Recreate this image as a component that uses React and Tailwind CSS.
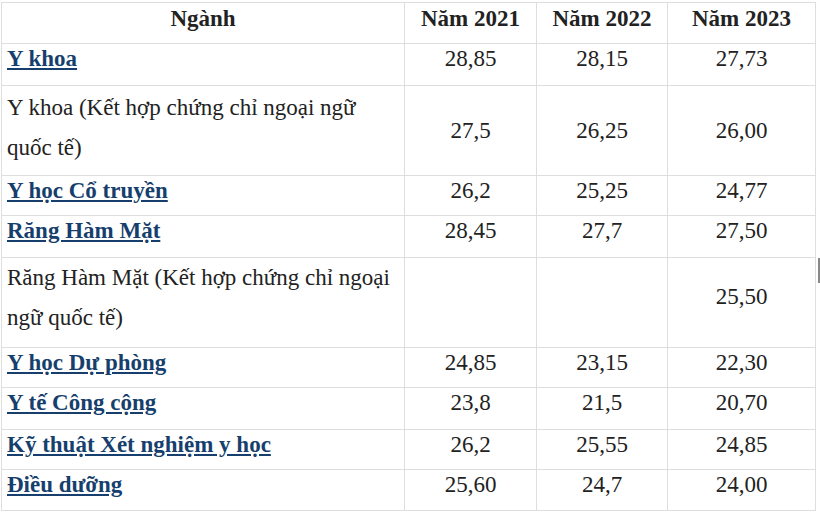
import React from "react";

const rows = [
  { name: "Y khoa", link: true, h: "h-[42px]", y21: "28,85", y22: "28,15", y23: "27,73" },
  {
    name: ["Y khoa (Kết hợp chứng chỉ ngoại ngữ", "quốc tế)"],
    h: "h-[90px]",
    y21: "27,5",
    y22: "26,25",
    y23: "26,00",
    pt: "pt-[2px]",
  },
  { name: "Y học Cổ truyền", link: true, h: "h-[40px]", y21: "26,2", y22: "25,25", y23: "24,77" },
  { name: "Răng Hàm Mặt", link: true, h: "h-[42px]", y21: "28,45", y22: "27,7", y23: "27,50" },
  {
    name: ["Răng Hàm Mặt (Kết hợp chứng chỉ ngoại", "ngữ quốc tế)"],
    h: "h-[90px]",
    y21: "",
    y22: "",
    y23: "25,50",
    up: true,
    pt: "pt-0",
  },
  { name: "Y học Dự phòng", link: true, h: "h-[40px]", y21: "24,85", y22: "23,15", y23: "22,30" },
  { name: "Y tế Công cộng", link: true, h: "h-[42px]", y21: "23,8", y22: "21,5", y23: "20,70" },
  { name: "Kỹ thuật Xét nghiệm y học", link: true, h: "h-[40px]", y21: "26,2", y22: "25,55", y23: "24,85" },
  { name: "Điều dưỡng", link: true, h: "h-[41px]", y21: "25,60", y22: "24,7", y23: "24,00" },
];

const cell = "border-r border-b border-[#dedede]";

const App = () => {
  return (
    <div className="relative w-[820px] h-[514px] bg-white overflow-hidden text-[23px] text-[#222] font-['Liberation_Serif','Times_New_Roman',serif]">
      <div className="ml-px mt-[2px] w-[815px] grid grid-cols-[403px_132px_131px_148px] border-t border-l border-[#dedede]">
        {/* Header */}
        {["Ngành", "Năm 2021", "Năm 2022", "Năm 2023"].map((t) => (
          <div key={t} className={`${cell} h-[41px] pt-[2px] font-bold text-center leading-[28px]`}>
            {t}
          </div>
        ))}

        {rows.map((r, i) => {
          const multi = Array.isArray(r.name);
          return (
            <React.Fragment key={i}>
              <div className={`${cell} ${r.h} pl-[5px] ${multi ? `${r.pt} leading-[40px]` : "pt-px leading-[28px]"}`}>
                {multi ? (
                  <>
                    {r.name[0]}
                    <br />
                    {r.name[1]}
                  </>
                ) : r.link ? (
                  <a href="#" className="font-bold text-[#173f6d] underline underline-offset-[2px]">
                    {r.name}
                  </a>
                ) : (
                  r.name
                )}
              </div>
              {[r.y21, r.y22, r.y23].map((v, j) => (
                <div
                  key={j}
                  className={`${cell} ${r.h} flex justify-center leading-[28px] ${
                    multi ? (r.up ? "items-center pb-[12px]" : "items-center") : "items-start pt-px"
                  }`}
                >
                  {v}
                </div>
              ))}
            </React.Fragment>
          );
        })}
      </div>
      {/* scrollbar sliver on the right edge */}
      <div className="absolute right-0 top-[258px] w-[2px] h-[25px] bg-[#888]" />
    </div>
  );
};

export default App;
